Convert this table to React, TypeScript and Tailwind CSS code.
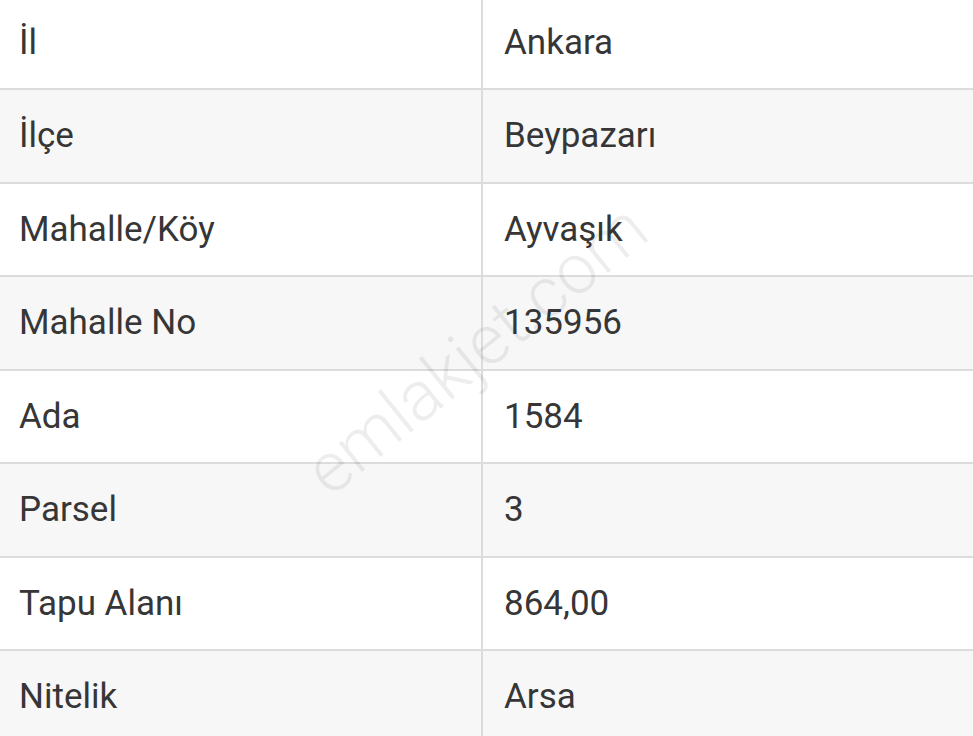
import React from "react";

const rows: [string, string][] = [
  ["İl", "Ankara"],
  ["İlçe", "Beypazarı"],
  ["Mahalle/Köy", "Ayvaşık"],
  ["Mahalle No", "135956"],
  ["Ada", "1584"],
  ["Parsel", "3"],
  ["Tapu Alanı", "864,00"],
  ["Nitelik", "Arsa"],
];

export default function App() {
  return (
    <div
      className="relative w-[973px] h-[736px] overflow-hidden bg-white text-[#363636]"
      style={{ fontFamily: "Roboto, 'Noto Sans', sans-serif" }}
    >
      <div className="flex flex-col mt-[-3.5px]">
        {rows.map(([k, v], i) => (
          <div
            key={k}
            className={`grid grid-cols-[483px_1fr] h-[93.5px] border-b-2 border-[#dcdcdc] ${
              i % 2 === 1 ? "bg-[#f7f7f7]" : "bg-white"
            }`}
          >
            <div className="flex items-center pl-[19px] border-r-2 border-[#dcdcdc] text-[35px] leading-none">
              {k}
            </div>
            <div className="flex items-center pl-[21px] text-[35px] leading-none">
              {v}
            </div>
          </div>
        ))}
      </div>
      <div className="pointer-events-none absolute left-[476px] top-[349px] -translate-x-1/2 -translate-y-1/2 -rotate-[39deg] whitespace-nowrap text-[70px] font-light text-black/[0.07] leading-none">
        emlakjet.com
      </div>
    </div>
  );
}
